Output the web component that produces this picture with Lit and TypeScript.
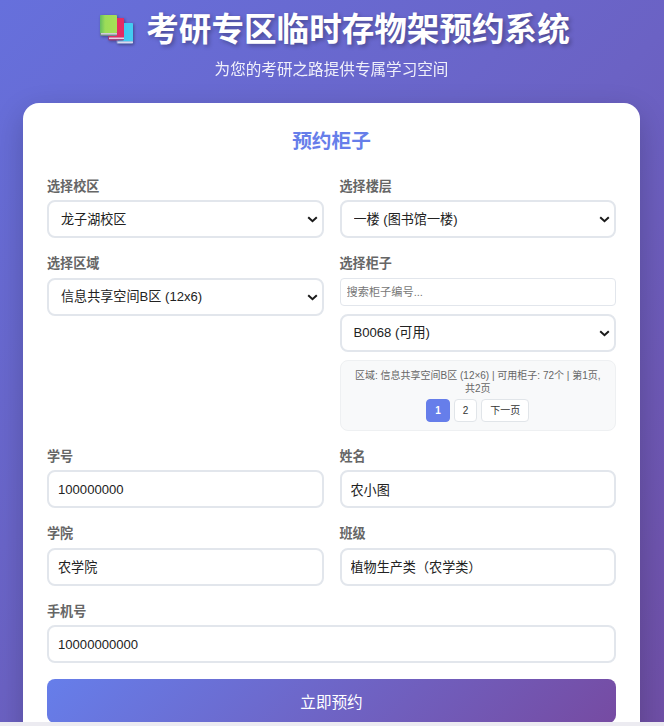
import { LitElement, html, css } from "lit";
import { customElement } from "lit/decorators.js";

@customElement("app-root")
export class AppRoot extends LitElement {
  static styles = css`
    :host {
      display: block;
      height: 726px;
      overflow: hidden;
      background: #ecebf1;
      font-family: "Liberation Sans", "Noto Sans CJK SC", sans-serif;
      color: #333;
    }
    .page {
      height: 722px;
      overflow: hidden;
      background: linear-gradient(135deg, #6670dc 0%, #6b62c4 50%, #6f4fa6 100%);
    }
    .wrap { width: 617px; padding: 0 0 0 23px; }
    header { text-align: center; color: #fff; margin-bottom: 24px; padding-top: 6px; }
    h1 {
      margin: 0 0 5.5px;
      padding-left: 7px;
      font-size: 32.6px;
      line-height: 48px;
      font-weight: 700;
      display: flex;
      justify-content: center;
      align-items: center;
      gap: 12px;
      text-shadow: 2px 2px 4px rgba(0, 0, 0, 0.3);
    }
    h1 svg { filter: drop-shadow(1px 1px 1.5px rgba(0, 0, 0, 0.35)); }
    .sub { font-size: 15.6px; line-height: 19px; opacity: 0.9; }
    .card {
      background: #fff;
      border-radius: 16px 16px 0 0;
      padding: 24px;
      box-shadow: 0 10px 30px rgba(0, 0, 0, 0.2);
    }
    h2 {
      margin: 0 0 23px;
      text-align: center;
      color: #667eea;
      font-size: 19.7px;
      line-height: 28px;
      font-weight: 700;
    }
    .grid { display: grid; grid-template-columns: 1fr 1fr; column-gap: 16px; row-gap: 17px; align-items: start; }
    .full { grid-column: 1 / -1; }
    label { display: block; font-size: 13.1px; line-height: 17px; font-weight: 600; color: #666; margin-bottom: 5.5px; }
    .sel { position: relative; }
    .sel svg { position: absolute; right: 6px; top: 16px; pointer-events: none; }
    select, input {
      display: block;
      width: 100%;
      box-sizing: border-box;
      height: 38px;
      border: 2px solid #e2e6ec;
      border-radius: 8px;
      background: #fff;
      font: inherit;
      font-size: 13.1px;
      color: #222;
      padding: 0 9px;
      outline: none;
    }
    select { appearance: none; -webkit-appearance: none; padding: 0 12px; }
    input.search {
      height: 28px;
      border-width: 1px;
      border-radius: 4px;
      font-size: 11.2px;
      padding: 0 6px;
      margin-bottom: 8px;
    }
    input.search::placeholder { color: #777; }
    .info {
      margin-top: 8px;
      background: #f8f9fa;
      border: 1px solid #eef0f2;
      border-radius: 8px;
      padding: 8px 10px;
      font-size: 10px;
      line-height: 13px;
      color: #666;
      text-align: center;
    }
    .pager { display: flex; justify-content: center; gap: 4px; margin-top: 4px; }
    .pager button {
      height: 23px;
      min-width: 23px;
      box-sizing: border-box;
      border: 1px solid #e1e5e9;
      background: #fff;
      border-radius: 4px;
      font: inherit;
      font-size: 10px;
      color: #333;
      padding: 0 8px;
    }
    .pager button.on { background: #667eea; border-color: #667eea; color: #fff; font-weight: 700; }
    .submit {
      display: block;
      width: 100%;
      height: 43.5px;
      margin-top: 16px;
      border: 0;
      border-radius: 8px;
      background: linear-gradient(135deg, #667eea 0%, #764ba2 100%);
      color: #fff;
      font: inherit;
      font-size: 15.6px;
    }
  `;

  private icon() {
    return html`<svg width="34" height="30" viewBox="0 0 34 30" aria-hidden="true">
      <defs>
        <linearGradient id="g" x1="0" x2="1" y1="0" y2="0">
          <stop offset="0" stop-color="#62bb62" />
          <stop offset="0.3" stop-color="#9bdc58" />
          <stop offset="1" stop-color="#a8df55" />
        </linearGradient>
        <linearGradient id="b" x1="0" x2="1" y1="0" y2="0">
          <stop offset="0" stop-color="#2f9fe0" />
          <stop offset="0.3" stop-color="#3cc8f0" />
          <stop offset="1" stop-color="#45cdf2" />
        </linearGradient>
      </defs>
      <rect x="16.5" y="8" width="16.5" height="21" rx="1.5" fill="#7a8fc8" />
      <rect x="18" y="8" width="15" height="18.5" rx="1" fill="url(#b)" />
      <rect x="17.5" y="26.5" width="15.5" height="1.6" fill="#dcd8ee" />
      <rect x="8" y="3" width="16" height="22.5" rx="1.5" fill="#9a3a78" />
      <rect x="9.5" y="3" width="14.5" height="19.5" rx="1" fill="#e42c62" />
      <rect x="9" y="22.5" width="15" height="1.6" fill="#e8d4e4" />
      <rect x="0" y="0" width="17" height="21" rx="1.5" fill="#6f8a8a" />
      <rect x="0" y="0" width="17" height="18" rx="1" fill="url(#g)" />
      <rect x="1" y="18" width="16" height="1.6" fill="#d0ccd8" />
    </svg>`;
  }

  private chev() {
    return html`<svg width="11" height="7" viewBox="0 0 11 7" aria-hidden="true">
      <path d="M1.2 1.2 L5.5 5.2 L9.8 1.2" fill="none" stroke="#1a1a1a" stroke-width="2" />
    </svg>`;
  }

  private sel(text: string) {
    return html`<div class="sel"><select><option>${text}</option></select>${this.chev()}</div>`;
  }

  render() {
    return html`<div class="page"><div class="wrap">
      <header>
        <h1>${this.icon()}<span>考研专区临时存物架预约系统</span></h1>
        <div class="sub">为您的考研之路提供专属学习空间</div>
      </header>
      <div class="card">
        <h2>预约柜子</h2>
        <div class="grid">
          <div><label>选择校区</label>${this.sel("龙子湖校区")}</div>
          <div><label>选择楼层</label>${this.sel("一楼 (图书馆一楼)")}</div>
          <div><label>选择区域</label>${this.sel("信息共享空间B区 (12x6)")}</div>
          <div>
            <label>选择柜子</label>
            <input class="search" placeholder="搜索柜子编号..." />
            ${this.sel("B0068 (可用)")}
            <div class="info">
              区域: 信息共享空间B区 (12×6) | 可用柜子: 72个 | 第1页, 共2页
              <div class="pager">
                <button class="on">1</button><button>2</button><button>下一页</button>
              </div>
            </div>
          </div>
          <div><label>学号</label><input value="100000000" /></div>
          <div><label>姓名</label><input value="农小图" /></div>
          <div><label>学院</label><input value="农学院" /></div>
          <div><label>班级</label><input value="植物生产类（农学类）" /></div>
          <div class="full"><label>手机号</label><input value="10000000000" /></div>
        </div>
        <button class="submit">立即预约</button>
      </div>
    </div></div>`;
  }
}
